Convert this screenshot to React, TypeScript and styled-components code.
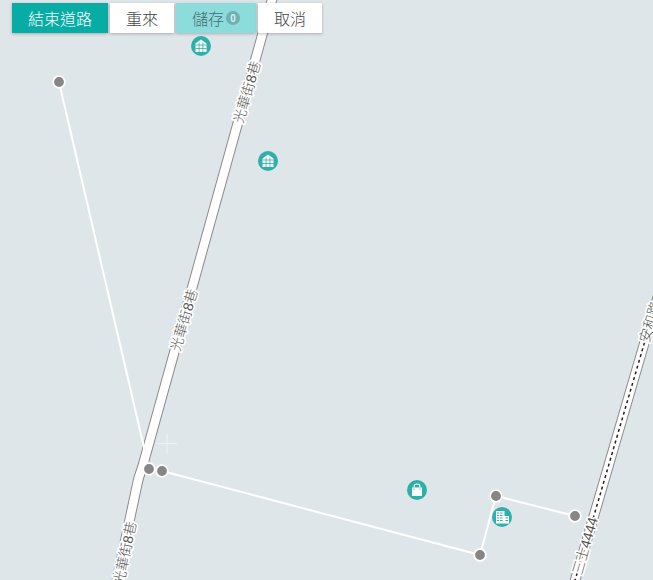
import React from 'react';
import styled, { createGlobalStyle } from 'styled-components';

const GlobalStyle = createGlobalStyle`
	html, body {
		margin: 0;
		padding: 0;
		background: #dfe6ea;
	}
`;

const FONT = `"Liberation Sans", "Noto Sans CJK TC", sans-serif`;

type Point = [number, number];

const nodes: Point[] = [
	[59, 82],
	[149, 469],
	[162, 471],
	[480, 555],
	[496, 496],
	[575, 516],
];

const ALLEY = 'M273 -4 L143 465 Q138 478 136 490 L116 584';
const AVENUE = 'M668 262 L574 584';

const App: React.FC = () => {
	return (
		<Page>
			<GlobalStyle />
			<MapCanvas viewBox="0 0 653 580">
				<RoadCasing d={ALLEY} />
				<RoadFill d={ALLEY} />
				<RoadCasing d={AVENUE} />
				<RoadFill d={AVENUE} />
				<RoadDash d={AVENUE} />

				<RoadLabel x={247} y={92} rotation={-73.5} text="光華街8巷" />
				<RoadLabel x={184} y={320} rotation={-73.5} text="光華街8巷" />
				<RoadLabel x={125} y={553} rotation={-78} text="光華街8巷" />
				<RoadLabel x={585} y={546} rotation={-74} text="三士4444" />
				<RoadLabel x={650} y={322} rotation={-73} text="安和路" />

				<Crosshair d="M167 434 V453 M157 443.5 H177" />

				<DrawnWay points="59,82 149,469" />
				<DrawnWay points="162,471 480,555 496,496 575,516" />

				<Poi cx={201} cy={46} kind="grid" />
				<Poi cx={268} cy={161} kind="grid" />
				<Poi cx={417} cy={490} kind="shop" />
				<Poi cx={502} cy={517} kind="office" />

				{nodes.map(([cx, cy]) => (
					<Node key={`${cx}-${cy}`} cx={cx} cy={cy} r={5.8} />
				))}
			</MapCanvas>

			<Toolbar>
				<Button $variant="primary" $width={96}>結束道路</Button>
				<Button $width={64}>重來</Button>
				<Button $variant="save" $width={80}>
					儲存<Count>0</Count>
				</Button>
				<Button $width={64}>取消</Button>
			</Toolbar>
		</Page>
	);
};

export default App;

const RoadLabel: React.FC<{ x: number; y: number; rotation: number; text: string }> = ({ x, y, rotation, text }) => (
	<LabelText x={x} y={y} transform={`rotate(${rotation} ${x} ${y})`} textAnchor="middle" dominantBaseline="central">
		{text}
	</LabelText>
);

const PoiGlyph: React.FC<{ kind: 'grid' | 'shop' | 'office' }> = ({ kind }) => {
	if (kind === 'shop') {
		return (
			<g>
				<path d="M-5 -2.5 H5 V6 H-5 Z" fill="#fff" />
				<path d="M-2.8 -2.5 V-4 Q-2.8 -6 0 -6 Q2.8 -6 2.8 -4 V-2.5" fill="none" stroke="#fff" strokeWidth="1.1" />
				<path d="M-3 -1.5 V-0.3 M3 -1.5 V-0.3" stroke="#2db0aa" strokeWidth="1" />
			</g>
		);
	}
	if (kind === 'office') {
		return (
			<g>
				<path d="M-6 -6 H2.5 V6.5 H-6 Z M2.5 -1 H7 V6.5 H2.5 Z" fill="#fff" />
				<path
					d="M-5 -4 H-3 M-2 -4 H0.5 M-5 -1.5 H-3 M-2 -1.5 H0.5 M-5 1 H-3 M-2 1 H0.5 M-5 3.5 H-3 M-2 3.5 H0.5 M3.5 1 H6 M3.5 3.5 H6"
					stroke="#2db0aa"
					strokeWidth="1"
				/>
			</g>
		);
	}
	return (
		<g>
			<path d="M-5.5 -2.5 L0 -6.5 L5.5 -2.5 V6 H-5.5 Z" fill="#fff" />
			<path d="M-5.5 -1 H5.5 M-5.5 2.5 H5.5 M-1.9 -3.5 V6 M1.9 -3.5 V6" stroke="#2db0aa" strokeWidth="0.8" />
		</g>
	);
};

const Poi: React.FC<{ cx: number; cy: number; kind: 'grid' | 'shop' | 'office' }> = ({ cx, cy, kind }) => (
	<g transform={`translate(${cx} ${cy})`}>
		<circle r={10} fill="#2db0aa" />
		<PoiGlyph kind={kind} />
	</g>
);

const Page = styled.div`
	position: relative;
	width: 653px;
	height: 580px;
	overflow: hidden;
	background: #dfe6ea;
	font-family: ${FONT};
`;

const MapCanvas = styled.svg`
	display: block;
	width: 653px;
	height: 580px;
`;

const RoadCasing = styled.path`
	fill: none;
	stroke: #8b8b8b;
	stroke-width: 10.5;
`;

const RoadFill = styled.path`
	fill: none;
	stroke: #ffffff;
	stroke-width: 8.5;
`;

const RoadDash = styled.path`
	fill: none;
	stroke: #222;
	stroke-width: 1.5;
	stroke-dasharray: 3 3;
`;

const LabelText = styled.text`
	font-family: ${FONT};
	font-size: 14px;
	font-weight: 300;
	fill: #555;
	stroke: #fff;
	stroke-width: 3.5px;
	stroke-linejoin: round;
	paint-order: stroke;
`;

const Crosshair = styled.path`
	fill: none;
	stroke: #eef2f4;
	stroke-width: 1;
`;

const DrawnWay = styled.polyline`
	fill: none;
	stroke: #fff;
	stroke-width: 2;
`;

const Node = styled.circle`
	fill: #868686;
	stroke: #fff;
	stroke-width: 1.8;
`;

const Toolbar = styled.div`
	position: absolute;
	top: 3px;
	left: 12px;
	display: flex;
	gap: 2px;
`;

const Button = styled.div<{ $variant?: 'primary' | 'save'; $width: number }>`
	display: flex;
	align-items: center;
	justify-content: center;
	width: ${props => props.$width}px;
	height: 30px;
	font-size: 16px;
	font-weight: 300;
	box-shadow: 0 1px 3px rgba(0, 0, 0, 0.25);
	background: ${props =>
		props.$variant === 'primary' ? '#07aca4' : props.$variant === 'save' ? '#8cdcdc' : '#ffffff'};
	color: ${props =>
		props.$variant === 'primary' ? '#ffffff' : props.$variant === 'save' ? '#4a6a70' : '#444444'};
`;

const Count = styled.span`
	display: inline-flex;
	align-items: center;
	justify-content: center;
	width: 14px;
	height: 14px;
	margin-left: 2px;
	border-radius: 50%;
	background: #6fb0b2;
	color: #d8f2f2;
	font-size: 10px;
	font-weight: bold;
`;
